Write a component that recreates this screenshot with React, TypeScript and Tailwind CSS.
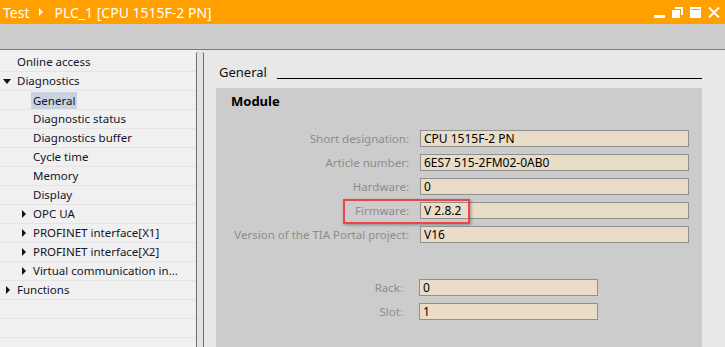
import React from "react";

const font = { fontFamily: '"Noto Sans", "Open Sans", sans-serif' };

function TriDown() {
  return (
    <svg width="8" height="5" viewBox="0 0 8 5" className="shrink-0">
      <polygon points="0,0 8,0 4,5" fill="#111" />
    </svg>
  );
}
function TriRight() {
  return (
    <svg width="4" height="8" viewBox="0 0 4 8" className="shrink-0">
      <polygon points="0,0 4,4 0,8" fill="#111" />
    </svg>
  );
}

type Row = { label: string; indent: number; arrow?: "down" | "right"; selected?: boolean };
const rows: Row[] = [
  { label: "Online access", indent: 17 },
  { label: "Diagnostics", indent: 17, arrow: "down" },
  { label: "General", indent: 33, selected: true },
  { label: "Diagnostic status", indent: 33 },
  { label: "Diagnostics buffer", indent: 33 },
  { label: "Cycle time", indent: 33 },
  { label: "Memory", indent: 33 },
  { label: "Display", indent: 33 },
  { label: "OPC UA", indent: 33, arrow: "right" },
  { label: "PROFINET interface[X1]", indent: 33, arrow: "right" },
  { label: "PROFINET interface[X2]", indent: 33, arrow: "right" },
  { label: "Virtual communication in...", indent: 33, arrow: "right" },
  { label: "Functions", indent: 17, arrow: "right" },
  { label: "", indent: 17 },
  { label: "", indent: 17 },
];

function TreeRow({ r }: { r: Row }) {
  return (
    <div className="relative h-[19px] border-b border-[#E4E4E4] flex items-center text-[11.5px] text-[#14142a]">
      {r.arrow === "down" && (
        <div className="absolute left-[3px] top-[7px]">
          <TriDown />
        </div>
      )}
      {r.arrow === "right" && (
        <div className={r.indent === 33 ? "absolute left-[22px] top-[5px]" : "absolute left-[6px] top-[5px]"}>
          <TriRight />
        </div>
      )}
      {r.label && (
        <span
          className={
            r.selected
              ? "ml-[31px] px-[2px] h-[17px] leading-[17px] bg-[#C9D3DF] whitespace-nowrap"
              : r.indent === 33
              ? "ml-[33px] whitespace-nowrap"
              : "ml-[17px] whitespace-nowrap"
          }
        >
          {r.label}
        </span>
      )}
    </div>
  );
}

function Field({ label, value, highlight }: { label: string; value: string; highlight?: boolean }) {
  return (
    <div className="relative flex items-center h-[17px] mb-[7px]">
      <div className="w-[193px] text-right text-[11.5px] text-[#8C8C8C] whitespace-nowrap leading-[17px]">{label}</div>
      <div className="ml-[11px] w-[269px] h-[17px] bg-[#EADDC7] border border-[#8F8F8F] text-[12px] text-black leading-[15px] pl-[3px] whitespace-nowrap">
        {value}
      </div>
      {highlight && (
        <div className="absolute left-[127px] top-[-3px] w-[127px] h-[25px] border-2 border-[#EE4448] shadow-[1px_1px_3px_rgba(0,0,0,0.35)]" />
      )}
    </div>
  );
}

function SmallField({ label, value }: { label: string; value: string }) {
  return (
    <div className="flex items-center h-[17px] mb-[7px]">
      <div className="w-[187px] text-right text-[11.5px] text-[#8C8C8C] whitespace-nowrap leading-[17px]">{label}</div>
      <div className="ml-[16px] w-[179px] h-[17px] bg-[#EADDC7] border border-[#8F8F8F] text-[12px] text-black leading-[15px] pl-[3px]">
        {value}
      </div>
    </div>
  );
}

export default function App() {
  return (
    <div className="w-[725px] h-[347px] overflow-hidden flex flex-col bg-[#E8E8E8]" style={font}>
      {/* Title bar */}
      <div className="h-[24px] bg-[#FF9F00] flex items-center text-white text-[14px] shrink-0">
        <span className="ml-[3px]">Test</span>
        <svg width="4" height="8" viewBox="0 0 4 8" className="ml-[10px]">
          <polygon points="0,0 4,4 0,8" fill="#fff" />
        </svg>
        <span className="ml-[11px]">PLC_1 [CPU 1515F-2 PN]</span>
        <div className="ml-auto mr-[5px] flex items-center gap-[7px]">
          <svg width="11" height="11" viewBox="0 0 11 11">
            <rect x="0" y="8" width="11" height="3" fill="#fff" />
          </svg>
          <svg width="11" height="11" viewBox="0 0 11 11">
            <rect x="3" y="0" width="8" height="2" fill="#fff" />
            <rect x="9" y="0" width="2" height="8" fill="#fff" />
            <rect x="0" y="3" width="8" height="8" fill="#fff" />
          </svg>
          <svg width="11" height="11" viewBox="0 0 11 11">
            <rect x="0" y="0" width="11" height="11" fill="#fff" />
            <rect x="1" y="2" width="9" height="1" fill="#FF9F00" />
          </svg>
          <svg width="12" height="11" viewBox="0 0 12 11">
            <path d="M1 0.5 L11 10.5 M11 0.5 L1 10.5" stroke="#fff" strokeWidth="2" />
          </svg>
        </div>
      </div>
      {/* toolbar */}
      <div className="h-[26px] bg-[#CCCCCC] border-b border-[#7A7A7A] shrink-0" />
      {/* main */}
      <div className="flex flex-1 min-h-0">
        <div className="w-[196px] bg-[#F0F0F0] pt-[3px] overflow-hidden">
          {rows.map((r, i) => (
            <TreeRow key={i} r={r} />
          ))}
        </div>
        <div className="w-[8px] mt-[2px] bg-[#E2E2E2] border-x border-[#707070] rounded-t-[2px]" />
        <div className="flex-1 flex flex-col pl-[12px] pr-[23px] pt-[14px]">
          <div className="h-[16px] flex items-center">
            <span className="text-[13px] leading-[16px] text-[#111] ml-[3px]">General</span>
            <div className="flex-1 h-px bg-black mt-[12px] ml-[10px]" />
          </div>
          <div className="mt-[8px] flex-1 bg-[#CCCCCC] pt-[5px]">
            <div className="ml-[15px] text-[13px] leading-[16px] font-bold text-black">Module</div>
            <div className="mt-[21px]">
              <Field label="Short designation:" value="CPU 1515F-2 PN" />
              <Field label="Article number:" value="6ES7 515-2FM02-0AB0" />
              <Field label="Hardware:" value="0" />
              <Field label="Firmware:" value="V 2.8.2" highlight />
              <Field label="Version of the TIA Portal project:" value="V16" />
            </div>
            <div className="mt-[36px]">
              <SmallField label="Rack:" value="0" />
              <SmallField label="Slot:" value="1" />
            </div>
          </div>
        </div>
      </div>
    </div>
  );
}
